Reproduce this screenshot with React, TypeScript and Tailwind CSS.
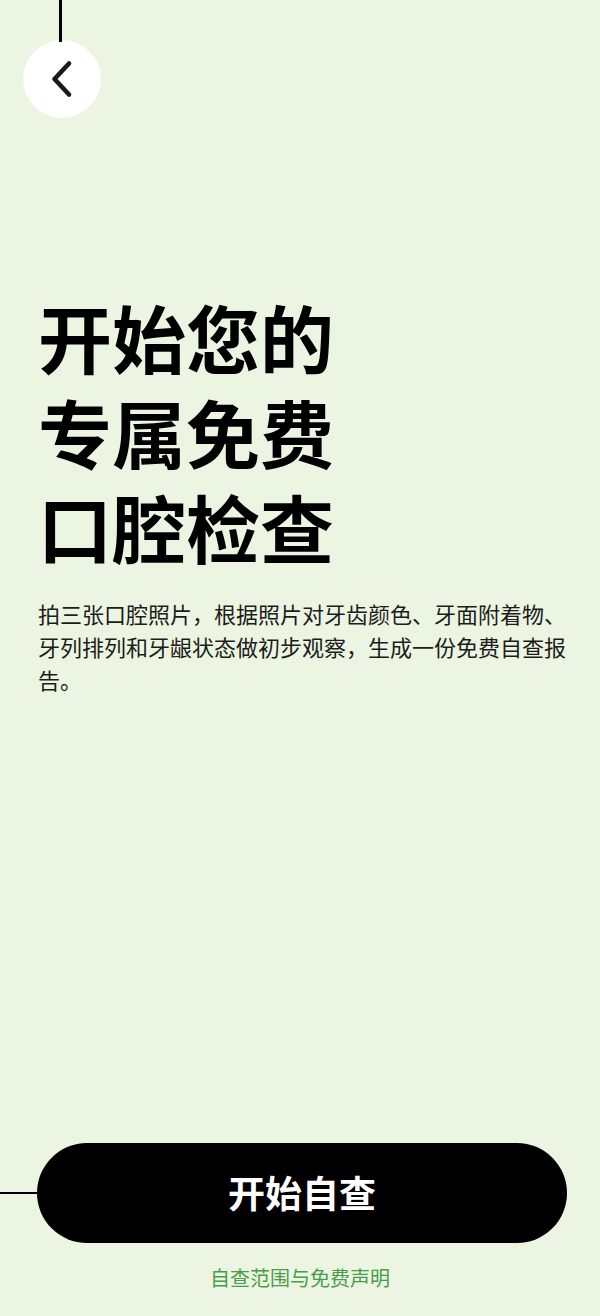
export default function App() {
  return (
    <div
      className="relative flex min-h-[1316px] w-full flex-col bg-[#ebf5e1] px-[38px] text-black"
      style={{ fontFamily: '"Noto Sans CJK SC", "Noto Sans", sans-serif' }}
    >
      {/* guide line above back button */}
      <div className="absolute left-[59px] top-0 h-[42px] w-[3px] bg-black" />

      <button className="-ml-[15px] mt-[40px] flex h-[78px] w-[78px] items-center justify-center rounded-full bg-white">
        <svg width="24" height="40" viewBox="0 0 24 40" fill="none">
          <polyline
            points="19,4.5 4.5,20 19,35.5"
            stroke="#1a1a1a"
            strokeWidth="4.6"
            strokeLinecap="round"
            strokeLinejoin="round"
          />
        </svg>
      </button>

      <h1 className="mt-[170px] text-[74px] font-bold leading-[95px]">
        开始您的
        <br />
        专属免费
        <br />
        口腔检查
      </h1>

      <p className="-mr-[12px] mt-[24px] text-[22px] leading-[33px] text-[#1c1c1c]">
        拍三张口腔照片，根据照片对牙齿颜色、牙面附着物、牙列排列和牙龈状态做初步观察，生成一份免费自查报告。
      </p>

      <div className="relative mt-auto">
        {/* guide line into the button */}
        <div className="absolute -left-[38px] top-[49px] h-[2px] w-[40px] bg-black" />
        <button className="-ml-px flex h-[100px] w-[530px] items-center justify-center rounded-full bg-black text-[37px] font-bold text-white">
          开始自查
        </button>
      </div>

      <a className="mb-[24px] mt-[21px] block text-center text-[20px] leading-[28px] text-[#4a9c4a]">
        自查范围与免费声明
      </a>
    </div>
  );
}
